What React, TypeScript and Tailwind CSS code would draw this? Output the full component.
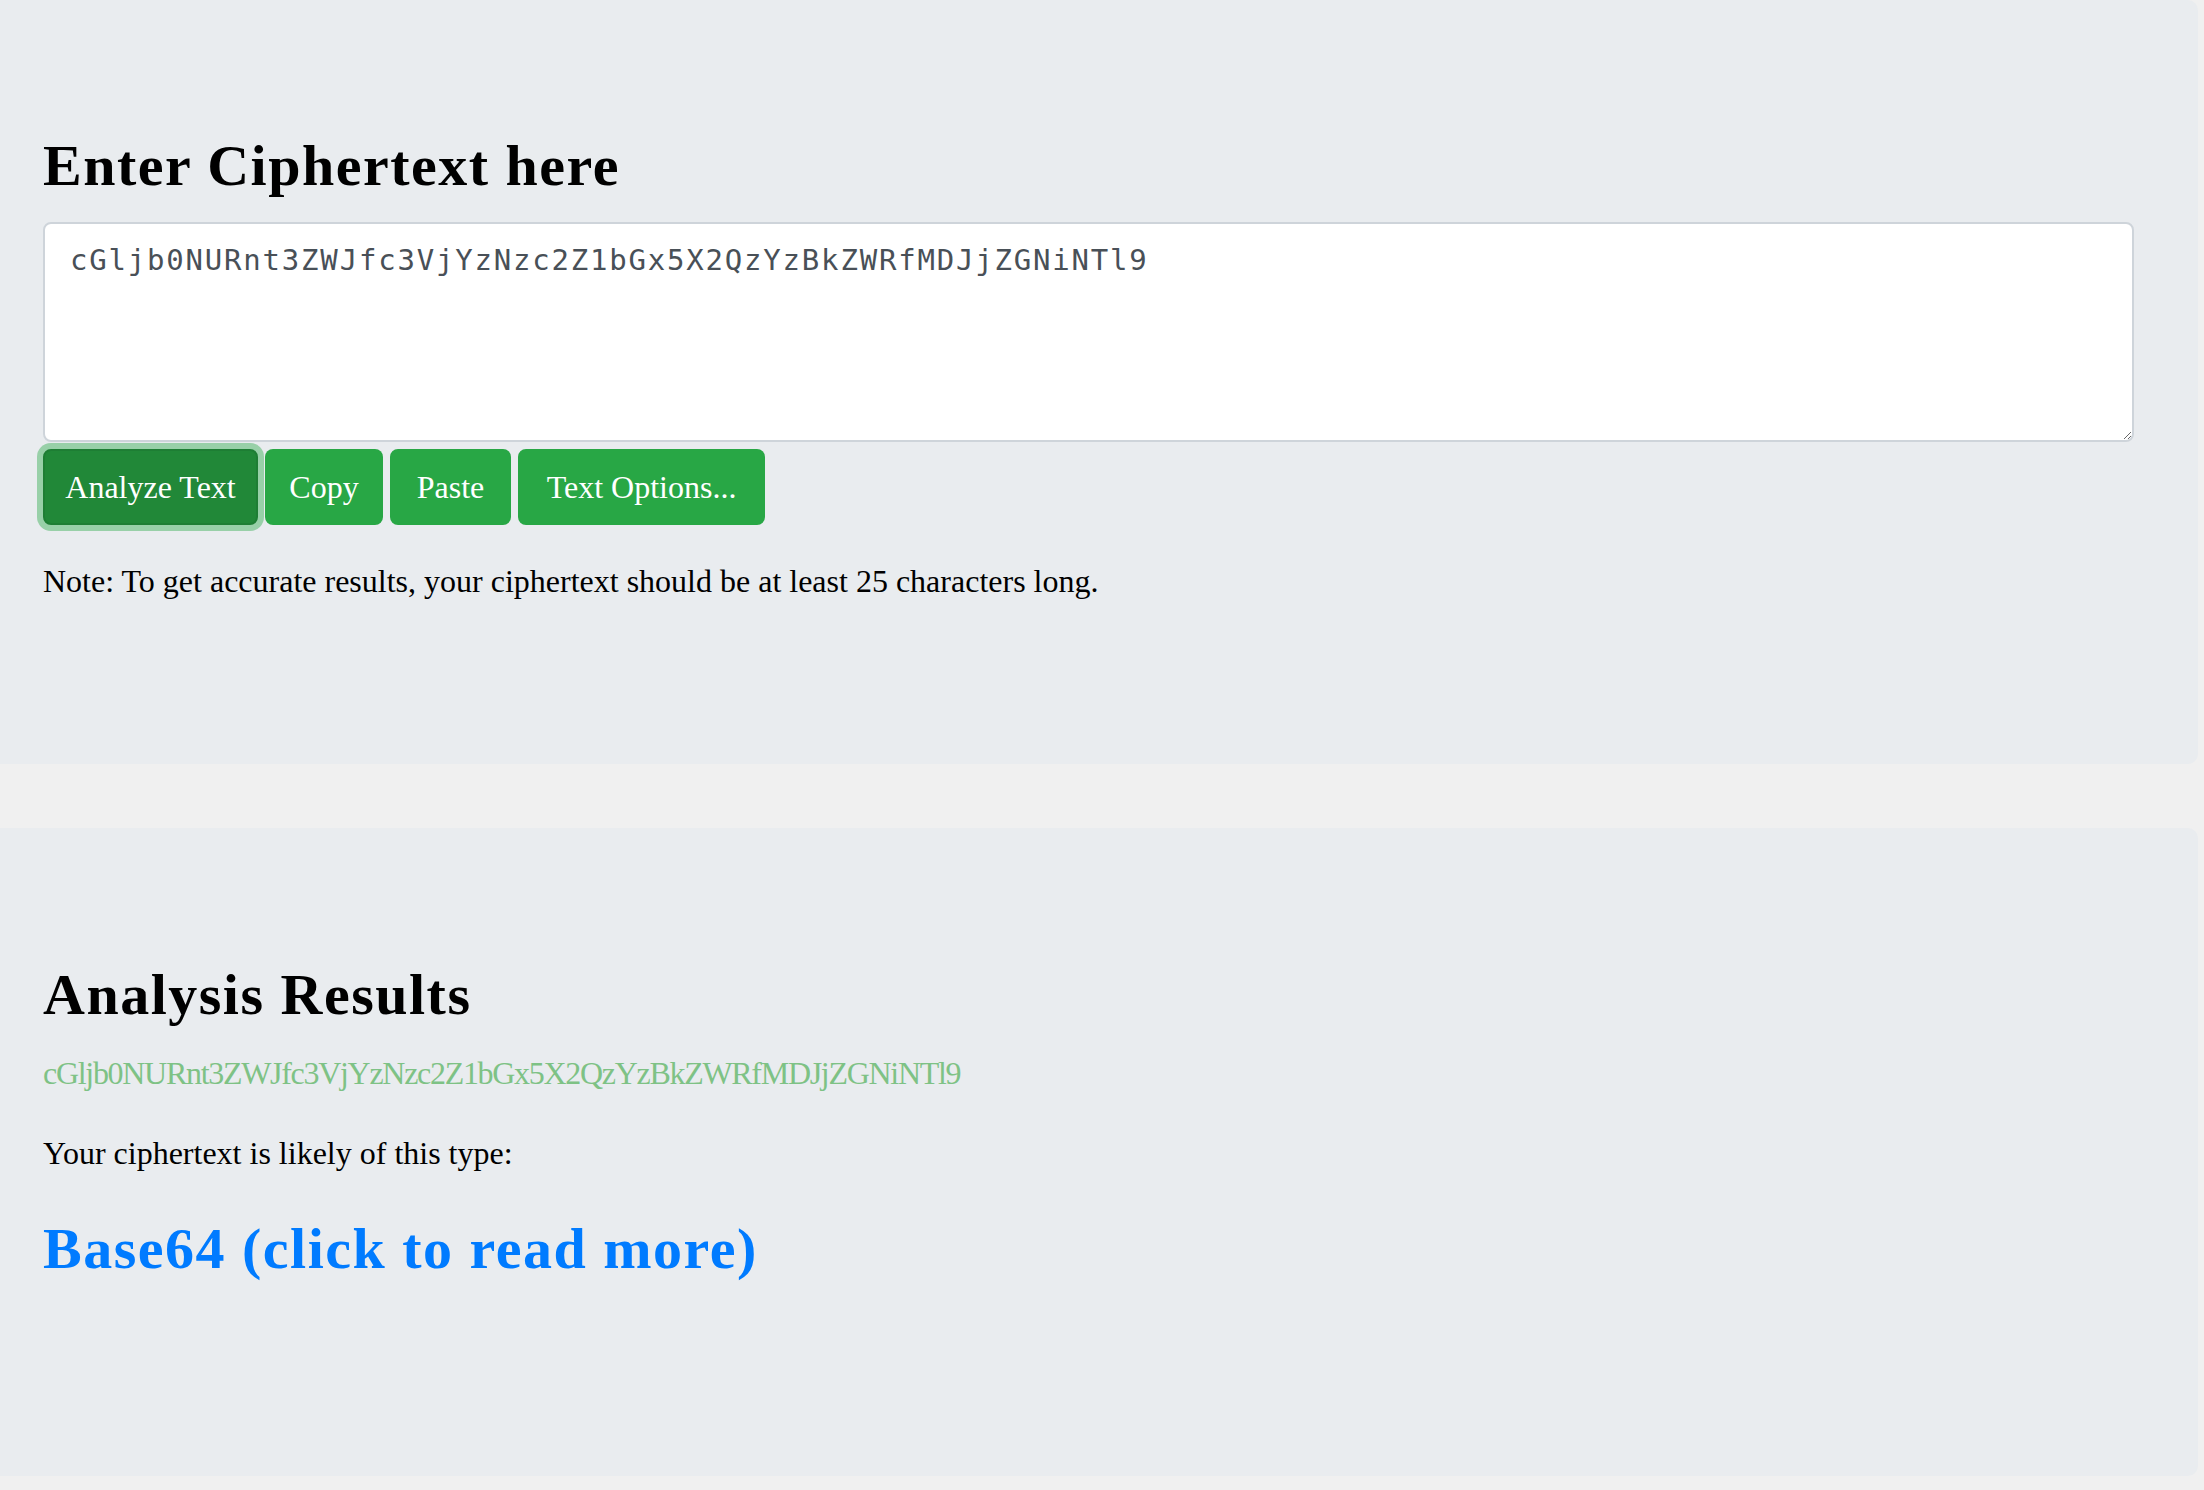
import { useState } from 'react'

const CIPHER = 'cGljb0NURnt3ZWJfc3VjYzNzc2Z1bGx5X2QzYzBkZWRfMDJjZGNiNTl9'

export default function App() {
  const [text, setText] = useState(CIPHER)

  return (
    <div className="min-h-screen bg-[#f0f0f0] pr-[6px] text-black" style={{ fontFamily: '"Liberation Serif", serif' }}>
      {/* input panel */}
      <div className="bg-[#e9ecef] rounded-r-[10px] pl-[43px] pr-[64px] pt-[131px] pb-[159px]">
        <h1 className="text-[58px] leading-[1.2] font-bold tracking-[1.5px] mb-[21px]">Enter Ciphertext here</h1>
        <textarea
          value={text}
          onChange={(e) => setText(e.target.value)}
          className="block w-full h-[220px] bg-white border-2 border-[#ced4da] rounded-[8px] px-[25px] pt-[15px] text-[29px] leading-[1.5] tracking-[1.8px] text-[#495057] outline-none"
          style={{ fontFamily: '"DejaVu Sans Mono", monospace' }}
        />
        <div className="flex gap-[7px] mt-[7px]">
          <button className="w-[215px] h-[76px] bg-[#218838] border-2 border-[#1e7e34] rounded-[8px] text-white text-[32px] ring-[6px] ring-[rgba(72,180,97,0.5)]">Analyze Text</button>
          <button className="w-[118px] h-[76px] bg-[#28a745] rounded-[8px] text-white text-[32px]">Copy</button>
          <button className="w-[121px] h-[76px] bg-[#28a745] rounded-[8px] text-white text-[32px]">Paste</button>
          <button className="w-[247px] h-[76px] bg-[#28a745] rounded-[8px] text-white text-[32px]">Text Options...</button>
        </div>
        <p className="text-[32px] leading-[1.5] mt-[32px]">Note: To get accurate results, your ciphertext should be at least 25 characters long.</p>
      </div>

      {/* results panel */}
      <div className="bg-[#e9ecef] rounded-r-[10px] mt-[64px] pl-[43px] pr-[64px] pt-[132px] pb-[192px]">
        <h2 className="text-[58px] leading-[1.2] font-bold tracking-[1.5px]">Analysis Results</h2>
        <p className="text-[32px] leading-[1.5] tracking-[-1.3px] text-[#7ec285] mt-[20px]">{CIPHER}</p>
        <p className="text-[32px] leading-[1.5] mt-[32px]">Your ciphertext is likely of this type:</p>
        <a href="#" className="block text-[58px] leading-[1.2] font-bold tracking-[1.5px] text-[#007bff] mt-[37px]">Base64 (click to read more)</a>
      </div>
    </div>
  )
}
